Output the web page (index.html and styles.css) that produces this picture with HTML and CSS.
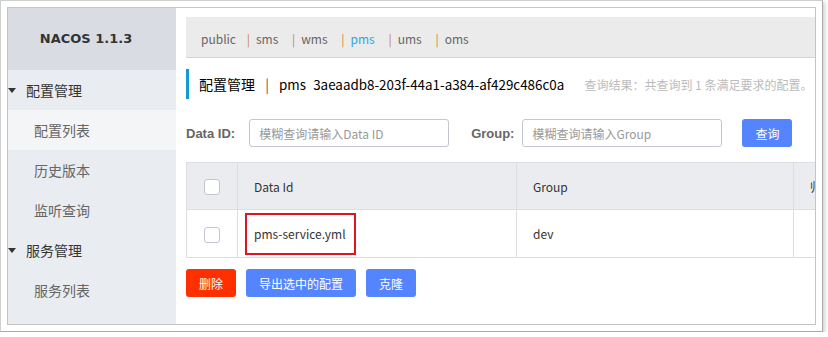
FILE: index.html
```html
<!DOCTYPE html>
<html lang="zh-CN">
<head>
  <meta charset="UTF-8" />
  <title>Nacos 配置列表</title>
  <link rel="stylesheet" href="styles.css">
</head>
<body>
  <div class="shot">
    <div class="frame">
      <div class="sidebar">
        <div class="brand">NACOS 1.1.3</div>
        <div class="nav-group"><span class="arrow"></span>配置管理</div>
        <div class="nav-item active">配置列表</div>
        <div class="nav-item">历史版本</div>
        <div class="nav-item">监听查询</div>
        <div class="nav-group"><span class="arrow"></span>服务管理</div>
        <div class="nav-item">服务列表</div>
      </div>

      <div class="main">
        <div class="ns-bar">
          <span class="ns">public</span>
          <span class="ns"><i>|</i>sms</span>
          <span class="ns"><i>|</i>wms</span>
          <span class="ns current"><i>|</i>pms</span>
          <span class="ns"><i>|</i>ums</span>
          <span class="ns"><i>|</i>oms</span>
        </div>

        <div class="title">
          <span class="title-main">配置管理</span>
          <span class="title-sep">|</span>
          <span class="title-ns">pms</span>
          <span class="title-id">3aeaadb8-203f-44a1-a384-af429c486c0a</span>
          <span class="title-result">查询结果：共查询到 1 条满足要求的配置。</span>
        </div>

        <div class="search">
          <label class="search-label">Data ID:</label>
          <input class="search-input" type="text" placeholder="模糊查询请输入Data ID">
          <label class="search-label group-label">Group:</label>
          <input class="search-input" type="text" placeholder="模糊查询请输入Group">
          <button class="btn btn-primary">查询</button>
        </div>

        <table class="config-table">
          <thead>
            <tr>
              <th class="col-check"><span class="checkbox"></span></th>
              <th class="col-id">Data Id</th>
              <th class="col-group">Group</th>
              <th class="col-app">归属应用</th>
            </tr>
          </thead>
          <tbody>
            <tr>
              <td class="col-check"><span class="checkbox"></span></td>
              <td class="col-id"><span class="marked">pms-service.yml</span></td>
              <td class="col-group">dev</td>
              <td class="col-app"></td>
            </tr>
          </tbody>
        </table>

        <div class="actions">
          <button class="btn btn-danger">删除</button>
          <button class="btn btn-primary">导出选中的配置</button>
          <button class="btn btn-primary">克隆</button>
        </div>
      </div>
    </div>
  </div>
</body>
</html>
```

FILE: styles.css
```css
body {
  margin: 0;
  background: #fff;
  font-family: "Noto Sans CJK SC", "Noto Sans", sans-serif;
  color: #333;
}

.shot {
  width: 809px;
  height: 318px;
  padding: 6px;
  border: 1px solid #cfcfcf;
  border-right-color: #a9a9a9;
  border-bottom-color: #a9a9a9;
  box-shadow: 2px 2px 4px rgba(0, 0, 0, 0.18);
  background: #fff;
}

.frame {
  height: 316px;
  border: 1px solid #c4c4c4;
  display: flex;
  overflow: hidden;
}

/* sidebar */
.sidebar {
  width: 168px;
  flex-shrink: 0;
  background: #e9ecf0;
}

.brand {
  height: 62px;
  line-height: 62px;
  padding-right: 12px;
  text-align: center;
  background: #d9dde3;
  font-family: "DejaVu Sans", sans-serif;
  font-weight: bold;
  font-size: 13px;
  color: #333;
}

.nav-group,
.nav-item {
  height: 40px;
  line-height: 40px;
  font-size: 14px;
  color: #333;
}

.nav-group {
  display: flex;
  align-items: center;
}

.arrow {
  width: 0;
  height: 0;
  margin: 0 10px 0 0;
  border-left: 4px solid transparent;
  border-right: 4px solid transparent;
  border-top: 5px solid #333;
}

.nav-item {
  padding-left: 26px;
  color: #666;
}

.nav-item.active {
  background: #f4f5f7;
}

/* main */
.main {
  flex: 1;
  min-width: 0;
  padding: 9px 0 0 10px;
  background: #fff;
  overflow: hidden;
}

.ns-bar {
  height: 40px;
  line-height: 44px;
  padding-left: 15px;
  background: #ebebeb;
  border-bottom: 1px solid #d6d6d6;
  font-size: 12px;
  color: #666;
  white-space: nowrap;
}

.ns {
  margin-right: 11px;
}

.ns:first-child {
  margin-right: 8px;
}

.ns i {
  font-style: normal;
  color: #c8873a;
  margin-right: 6px;
}

.ns.current {
  color: #2fa8d8;
}

.title {
  margin-top: 11px;
  height: 30px;
  line-height: 30px;
  border-left: 3px solid #1399d4;
  padding-left: 10px;
  font-size: 14px;
  color: #000;
  white-space: nowrap;
}

.title-sep {
  margin: 0 7px;
  color: #555;
}

.title-ns,
.title-id {
  font-size: 13.4px;
}

.title-ns {
  margin-right: 4px;
}

.title-result {
  margin-left: 17px;
  font-size: 12px;
  color: #bbb;
}

.search {
  margin-top: 20px;
  height: 28px;
  display: flex;
  align-items: center;
}

.search-label {
  font-family: "Liberation Sans", sans-serif;
  font-size: 13px;
  font-weight: bold;
  color: #666;
  margin-right: 14px;
}

.group-label {
  margin-left: 22px;
  margin-right: 8px;
}

.search-input {
  width: 200px;
  height: 28px;
  box-sizing: border-box;
  padding: 0 9px;
  border: 1px solid #c4c6cf;
  border-radius: 3px;
  font-family: inherit;
  font-size: 12px;
}

.search-input::placeholder {
  color: #999;
}

.btn {
  height: 28px;
  padding: 0 13px;
  border: none;
  border-radius: 3px;
  color: #fff;
  font-family: inherit;
  font-size: 12px;
}

.search .btn {
  width: 50px;
  margin-left: 20px;
}

.btn-primary {
  background: #5584ff;
}

.btn-danger {
  background: #ff3000;
}

/* table */
.config-table {
  margin-top: 15px;
  width: 720px;
  border-collapse: collapse;
  font-size: 12px;
  color: #333;
  table-layout: fixed;
}

.config-table th,
.config-table td {
  border: 1px solid #dcdee3;
  text-align: left;
  padding: 0 16px;
  font-weight: normal;
}

.config-table th {
  height: 46px;
  background: #ebecf0;
}

.config-table td {
  height: 47px;
}

.col-check {
  width: 18px;
}

.config-table .col-check {
  text-align: center;
}

.col-id {
  width: 246px;
}

.col-group {
  width: 244px;
}

.checkbox {
  display: inline-block;
  width: 16px;
  height: 16px;
  box-sizing: border-box;
  border: 1px solid #c4c6cf;
  border-radius: 3px;
  background: #fff;
  vertical-align: middle;
}

.marked {
  display: inline-block;
  margin-left: -9px;
  padding: 10px 8px 11px 7px;
  border: 2px solid #e0141e;
}

.actions {
  margin-top: 11px;
  display: flex;
  gap: 10px;
}

.actions .btn {
  min-width: 50px;
}
```
